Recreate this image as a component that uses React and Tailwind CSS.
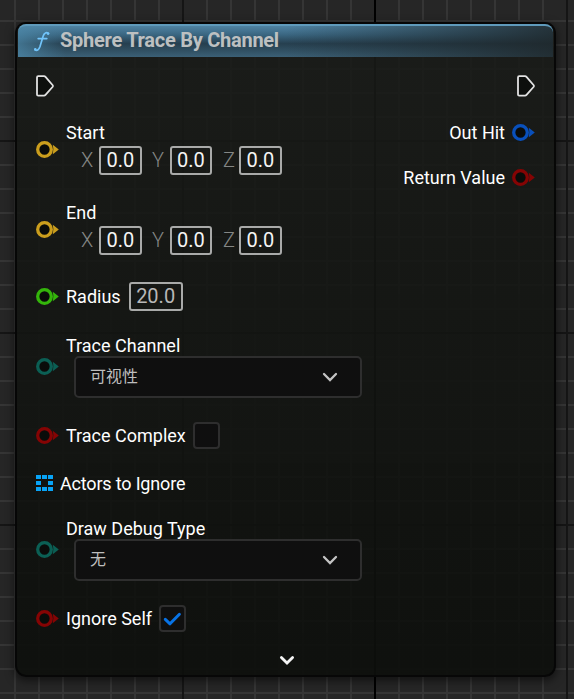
import React from 'react';

function Pin({ color }) {
  return (
    <svg width="23" height="18" viewBox="0 0 23 18" className="block shrink-0">
      <circle cx="8.5" cy="8.5" r="6.8" fill="#0a0c0a" stroke={color} strokeWidth="3.3" />
      <path d="M16.8 3.8 L22.8 8.5 L16.8 13.2 Q18 8.5 16.8 3.8Z" fill={color} />
    </svg>
  );
}

function ExecPin() {
  return (
    <svg width="20" height="24" viewBox="0 0 20 24" className="block shrink-0">
      <path d="M2 3.4 Q2 2.2 3.2 2.2 H9 Q9.9 2.2 10.5 2.9 L17.7 11.2 Q18.3 12 17.7 12.8 L10.5 20.9 Q9.9 21.6 9 21.6 H3.2 Q2 21.6 2 20.4Z" fill="#0d0f0d" stroke="#e2e2e2" strokeWidth="1.8" />
    </svg>
  );
}

function ArrayPin() {
  const cells = [[0, 0], [6, 0], [12, 0], [0, 6], [12, 6], [0, 12], [12, 12], [6, 12]];
  return (
    <svg width="17" height="16" viewBox="0 0 17 16" className="block shrink-0">
      {cells.map(([x, y]) => (
        <rect key={x + '-' + y} x={x} y={y} width="5" height="4" fill="#08a4f7" />
      ))}
    </svg>
  );
}

function Axis({ name, className, box }) {
  return (
    <>
      <span className={'text-[20px] font-light leading-[28px] text-[#858785] ' + className}>{name}</span>
      <div className={'flex h-[29px] items-center justify-center rounded-[3px] border-2 border-[#a9aaa9] pb-[2px] text-[20px] leading-none text-[#f4f4f4] ' + box}>0.0</div>
    </>
  );
}

function VectorInput({ label }) {
  return (
    <div className="flex h-[80px]">
      <div className="pt-[21px]"><Pin color="#cb9e1d" /></div>
      <div className="pl-[7px]">
        <div className="h-[26px] pt-[1px] text-[18px] leading-[24px]">{label}</div>
        <div className="flex items-start pl-[15px]">
          <Axis name="X" className="w-[18px]" box="w-[43px]" />
          <Axis name="Y" className="ml-[10px] w-[18px]" box="w-[42px]" />
          <Axis name="Z" className="ml-[11px] w-[16px]" box="w-[43px]" />
        </div>
      </div>
    </div>
  );
}

function Select({ label, value }) {
  return (
    <div className="flex h-[66px]">
      <div className="pt-[25px]"><Pin color="#0b5f54" /></div>
      <div className="pl-[7px]">
        <div className="h-[23px] pt-[1px] text-[18px] leading-[24px]">{label}</div>
        <div className="ml-[8px] flex h-[42px] w-[288px] items-center justify-between rounded-[5px] border-2 border-[#2e2e2e] bg-[#0f0f0f] pl-[14px] pr-[22px]">
          <span className="text-[16px] leading-none text-[#bebebe]">{value}</span>
          <svg width="16" height="12" viewBox="0 0 16 12" className="block"><path d="M2 3 L8 9 L14 3" fill="none" stroke="#c4c4c4" strokeWidth="2.3" strokeLinecap="round" /></svg>
        </div>
      </div>
    </div>
  );
}

function CheckRow({ label, checked }) {
  return (
    <div className="flex h-[27px] items-center">
      <Pin color="#850404" />
      <span className="ml-[7px] text-[18px] leading-[24px]">{label}</span>
      <span className="ml-[7px] flex h-[27px] w-[27px] items-center justify-center rounded-[4px] border-2 border-[#2e2e2e] bg-[#0f0f0f]">
        {checked && (
          <svg width="19" height="15" viewBox="0 0 19 15" className="shrink-0"><path d="M2.3 8.4 L7 12.8 L16.4 3.3" fill="none" stroke="#0873e6" strokeWidth="3" strokeLinecap="round" strokeLinejoin="round" /></svg>
        )}
      </span>
    </div>
  );
}

function Output({ label, color }) {
  return (
    <div className="flex h-[24px] items-center">
      <span className="text-[18px] leading-[24px]">{label}</span>
      <span className="ml-[7px]"><Pin color={color} /></span>
    </div>
  );
}

export default function App() {
  return (
    <div className="relative h-[699px] w-[574px] overflow-hidden bg-[#262626] pl-[15px] pt-[22px] font-['Roboto','Noto_Sans_CJK_SC',sans-serif] text-white">
      <div className="absolute inset-0 bg-[linear-gradient(to_right,#353535_2px,transparent_2px),linear-gradient(to_bottom,#353535_2px,transparent_2px)] bg-[size:24px_24px] bg-[position:14px_20px]" />
      <div className="absolute inset-0 bg-[linear-gradient(to_right,#151515_2px,transparent_2px),linear-gradient(to_bottom,#151515_2px,transparent_2px)] bg-[size:192px_192px] bg-[position:182px_140px]" />
      <div className="absolute inset-y-0 left-[374px] w-[2px] bg-black" />

      <div className="relative h-[655px] w-[541px] rounded-[11px] border-2 border-[#050605]/90 bg-[linear-gradient(to_bottom,rgba(26,28,25,0.87),rgba(20,22,19,0.89)_35%,rgba(13,15,12,0.91))] shadow-[0_3px_9px_1px_rgba(0,0,0,0.5)]">
        <div className="mx-[1px] flex h-[33px] items-center rounded-t-[8px] border-t-2 border-[#5f9abb] bg-[linear-gradient(to_right,rgba(77,137,170,0.7),transparent_9%),linear-gradient(to_right,transparent_50%,rgba(30,38,41,0.85)),linear-gradient(to_bottom,#4f83a3,#3a6681_28%,#263f4f_57%,#304f61_78%,#3b6076)]">
          <svg width="18" height="22" viewBox="0 0 18 22" className="ml-[15px] block"><path d="M15.5 2.6 C13.5 .9 11.2 1.7 10.2 5 L7 15.5 C5.8 19.1 3.8 20.2 2 18.7 M5.2 7.6 H13.8" fill="none" stroke="#71c4fa" strokeWidth="1.7" strokeLinecap="round" /><circle cx="15" cy="2.6" r="1.3" fill="#71c4fa" /><circle cx="2.3" cy="18.4" r="1.3" fill="#71c4fa" /></svg>
          <span className="ml-[9px] pb-[3px] text-[20px] font-bold leading-[28px] tracking-[-0.26px] text-[#bdc0c1]">Sphere Trace By Channel</span>
        </div>

        <div className="flex h-[63px] items-start justify-between pl-[18px] pr-[18px] pt-[17px]">
          <ExecPin />
          <ExecPin />
        </div>

        <div className="flex justify-between pl-[19px] pr-[19px]">
          <div>
            <VectorInput label="Start" />
            <VectorInput label="End" />
            <div className="flex h-[53px] items-start pt-[2px]">
              <div className="pt-[6px]"><Pin color="#34b50b" /></div>
              <span className="ml-[7px] mt-[3px] text-[18px] leading-[24px]">Radius</span>
              <div className="ml-[8px] flex h-[29px] w-[54px] items-center justify-center rounded-[3px] border-2 border-[#a9aaa9] pb-[2px] text-[20px] leading-none text-[#b8b8b8]">20.0</div>
            </div>
            <Select label="Trace Channel" value="可视性" />
            <div className="pt-[23px]"><CheckRow label="Trace Complex" /></div>
            <div className="flex h-[67px] items-center">
              <ArrayPin />
              <span className="ml-[7px] pt-[2px] text-[18px] leading-[24px] tracking-[-0.18px]">Actors to Ignore</span>
            </div>
            <Select label="Draw Debug Type" value="无" />
            <div className="pt-[23px]"><CheckRow label="Ignore Self" checked /></div>
          </div>
          <div className="flex flex-col items-end gap-[21px] pt-[1px]">
            <Output label="Out Hit" color="#0950bb" />
            <Output label="Return Value" color="#850404" />
          </div>
        </div>
        <div className="flex justify-center pt-[22px]">
          <svg width="18" height="12" viewBox="0 0 18 12" className="ml-[3px]"><path d="M3.4 3.5 L9 9.1 L14.6 3.5" fill="none" stroke="#f4f4f4" strokeWidth="2.8" strokeLinecap="round" /></svg>
        </div>
      </div>
    </div>
  );
}
